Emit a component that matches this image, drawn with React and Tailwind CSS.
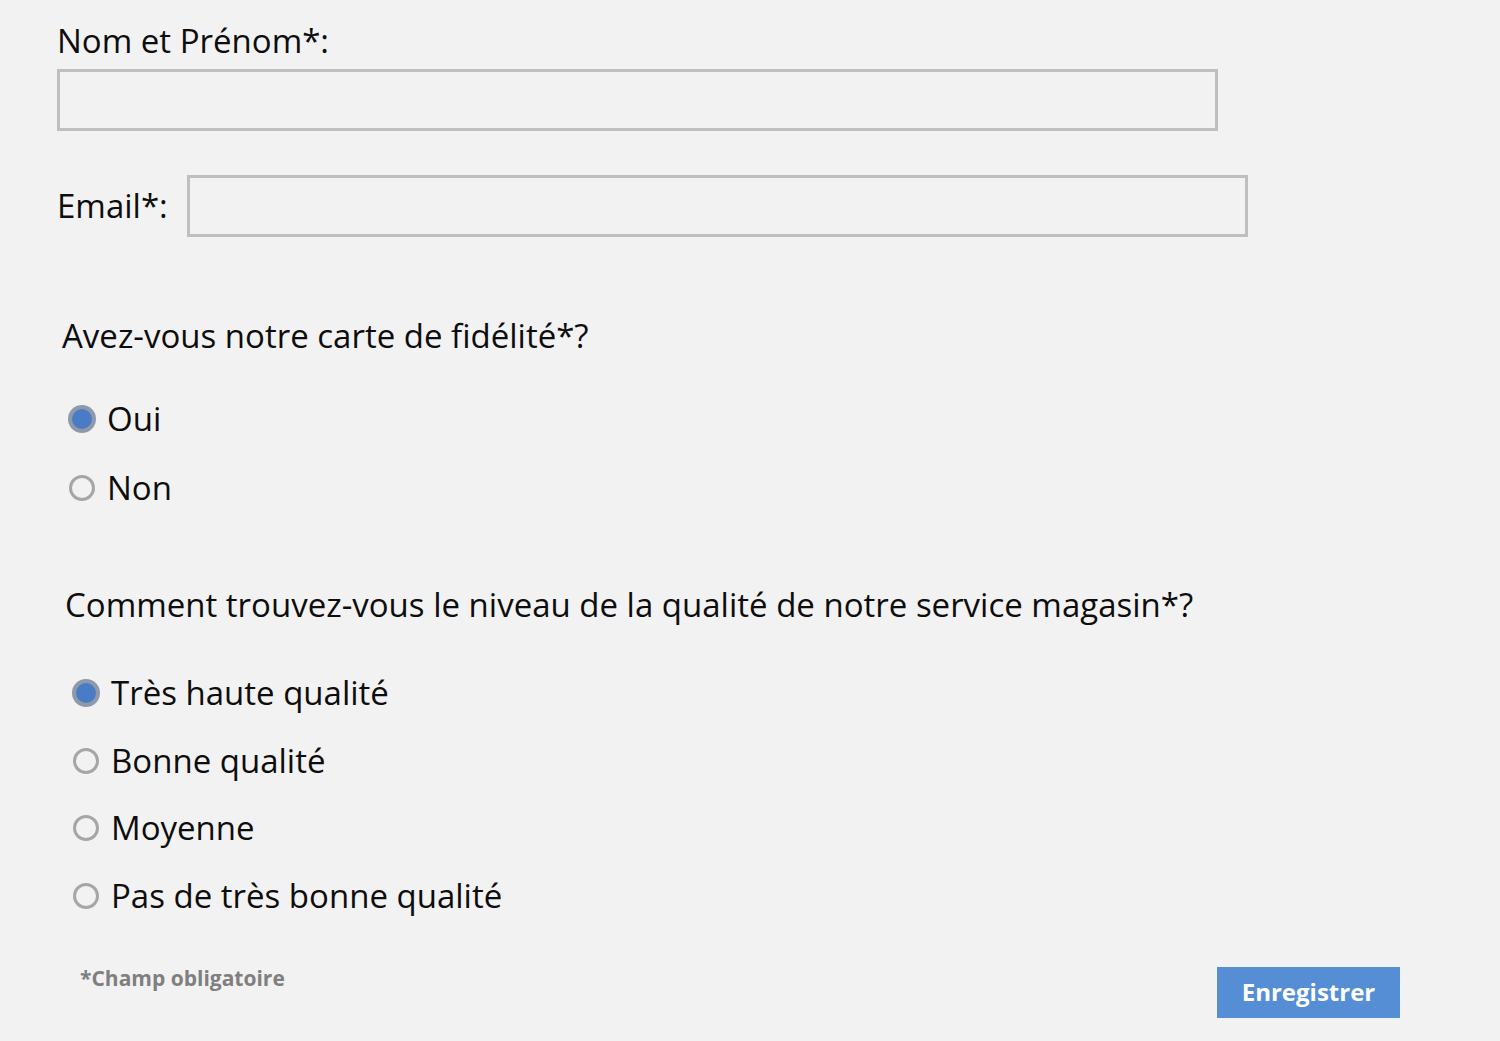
import React, { useState } from 'react';

const font = { fontFamily: '"Open Sans", Lato, "Liberation Sans", sans-serif' };

function Radio({ checked, label, onClick, className = '' }) {
  return (
    <label onClick={onClick} className={`flex h-[40px] cursor-pointer items-center ${className}`}>
      {checked ? (
        <span className="flex size-[28px] items-center justify-center rounded-full bg-[#8e9aab]">
          <span className="size-[20px] rounded-full bg-[#4a7cc6]" />
        </span>
      ) : (
        <span className="mx-[1px] size-[26px] rounded-full border-[3px] border-[#a6a6a6]" />
      )}
      <span className="ml-[11px] text-[33px] text-[#0d0d0d]">{label}</span>
    </label>
  );
}

export default function App() {
  const [carte, setCarte] = useState('Oui');
  const [qualite, setQualite] = useState('Très haute qualité');

  const niveaux = ['Très haute qualité', 'Bonne qualité', 'Moyenne', 'Pas de très bonne qualité'];

  return (
    <div className="min-h-[1041px] w-full bg-[#f2f2f2] text-[#0d0d0d] [font-variant-ligatures:none]" style={font}>
      <div className="flex flex-col pl-[57px] pt-[20px]">
        {/* Nom */}
        <div className="flex h-[42px] items-center text-[33px]">Nom et Prénom*:</div>
        <input className="mt-[7px] h-[62px] w-[1161px] border-[3px] border-[#bfbfbf] bg-[#f2f2f2] outline-none" />

        {/* Email */}
        <div className="mt-[44px] flex h-[62px] items-center">
          <span className="w-[130px] text-[33px]">Email*:</span>
          <input className="h-[62px] w-[1061px] border-[3px] border-[#bfbfbf] bg-[#f2f2f2] outline-none" />
        </div>

        {/* Carte fidélité */}
        <div className="ml-[5px] mt-[79px] flex h-[40px] items-center text-[33px]">Avez-vous notre carte de fidélité*?</div>
        <div className="ml-[11px] mt-[43px] flex flex-col gap-[29px]">
          {['Oui', 'Non'].map(v => (
            <Radio key={v} label={v} checked={carte === v} onClick={() => setCarte(v)} />
          ))}
        </div>

        {/* Qualité */}
        <div className="ml-[8px] mt-[77px] flex h-[40px] items-center text-[33px]">
          Comment trouvez-vous le niveau de la qualité de notre service magasin*?
        </div>
        <div className="ml-[15px] mt-[48px] flex flex-col gap-[27.5px]">
          {niveaux.map(v => (
            <Radio key={v} label={v} checked={qualite === v} onClick={() => setQualite(v)} />
          ))}
        </div>

        {/* Footer */}
        <div className="mt-[51px] flex w-[1343px] items-start justify-between">
          <span className="ml-[23px] mt-[-4px] text-[21px] font-bold text-[#7f7f7f]">*Champ obligatoire</span>
          <button className="h-[51px] w-[183px] bg-[#558ed5] text-[24px] font-bold text-white">Enregistrer</button>
        </div>
      </div>
    </div>
  );
}
